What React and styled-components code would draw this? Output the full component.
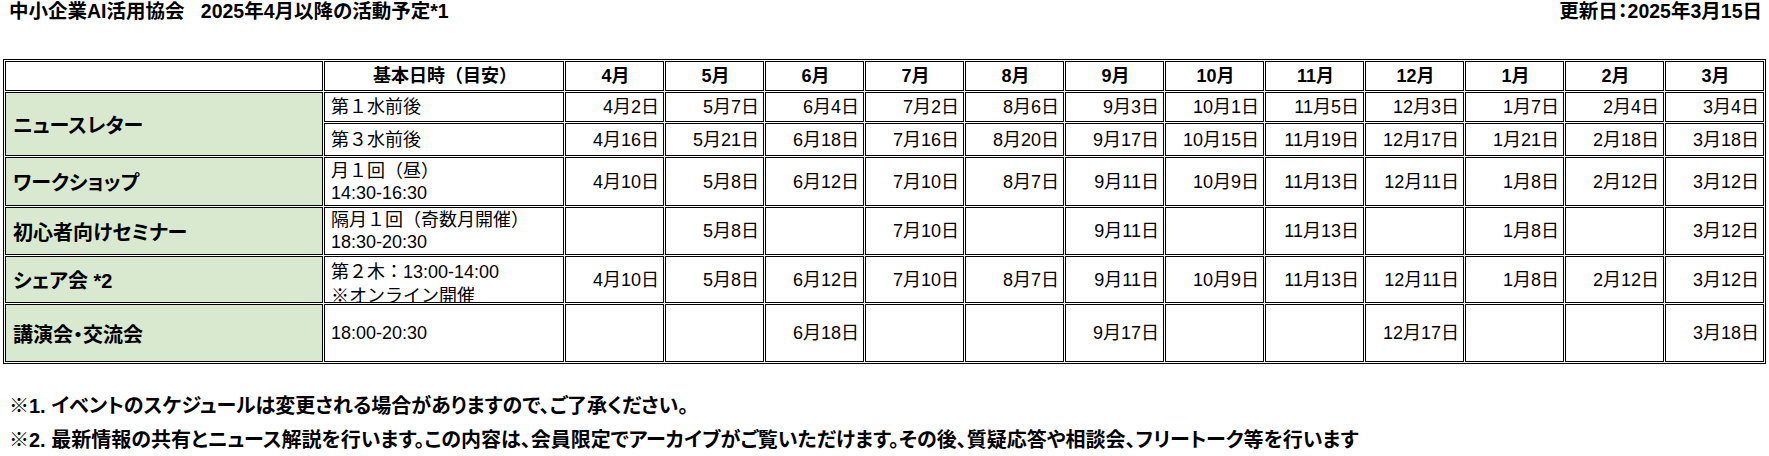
import styled, { createGlobalStyle } from 'styled-components';

const GlobalStyle = createGlobalStyle`
  *, *::before, *::after { box-sizing: border-box; }
  html, body {
    margin: 0;
    padding: 0;
    background: #fff;
  }
  body {
    font-family: "Liberation Sans", "Noto Sans CJK JP", sans-serif;
    color: #000;
  }
`;

const months = ['4月', '5月', '6月', '7月', '8月', '9月', '10月', '11月', '12月', '1月', '2月', '3月'];

const monthly = ['4月10日', '5月8日', '6月12日', '7月10日', '8月7日', '9月11日', '10月9日', '11月13日', '12月11日', '1月8日', '2月12日', '3月12日'];

const rows = [
  {
    label: 'ニュースレター',
    subs: [
      {
        lines: ['第１水前後'],
        h: 28,
        dates: ['4月2日', '5月7日', '6月4日', '7月2日', '8月6日', '9月3日', '10月1日', '11月5日', '12月3日', '1月7日', '2月4日', '3月4日'],
      },
      {
        lines: ['第３水前後'],
        h: 31,
        dates: ['4月16日', '5月21日', '6月18日', '7月16日', '8月20日', '9月17日', '10月15日', '11月19日', '12月17日', '1月21日', '2月18日', '3月18日'],
      },
    ],
  },
  {
    label: 'ワークショップ',
    subs: [{ lines: ['月１回（昼）', '14:30-16:30'], h: 47, dates: monthly }],
  },
  {
    label: '初心者向けセミナー',
    subs: [
      {
        lines: ['隔月１回（奇数月開催）', '18:30-20:30'],
        h: 46,
        dates: ['', '5月8日', '', '7月10日', '', '9月11日', '', '11月13日', '', '1月8日', '', '3月12日'],
      },
    ],
  },
  {
    label: 'シェア会 *2',
    subs: [{ lines: ['第２木：13:00-14:00', '※オンライン開催'], h: 45, dates: monthly, clipped: true }],
  },
  {
    label: '講演会・交流会',
    subs: [
      {
        lines: ['18:00-20:30'],
        h: 56,
        dates: ['', '', '6月18日', '', '', '9月17日', '', '', '12月17日', '', '', '3月18日'],
      },
    ],
  },
];

export default function App() {
  return (
    <Page>
      <GlobalStyle />
      <TopBar>
        <span>中小企業AI活用協会{'\u00a0\u00a0\u00a0'}2025年4月以降の活動予定*1</span>
        <span>更新日：2025年3月15日</span>
      </TopBar>

      <Schedule>
        <colgroup>
          <Col $w={318} />
          <Col $w={240} />
          {months.map(m => <Col key={m} $w={99} />)}
        </colgroup>
        <thead>
          <tr>
            <HeadCell><Box $h={28} $align="center" /></HeadCell>
            <HeadCell><Box $h={28} $align="center">基本日時（目安）</Box></HeadCell>
            {months.map(m => (
              <HeadCell key={m}><Box $h={28} $align="center">{m}</Box></HeadCell>
            ))}
          </tr>
        </thead>
        <tbody>
          {rows.map(row =>
            row.subs.map((sub, i) => (
              <tr key={row.label + i}>
                {i === 0 && <Label rowSpan={row.subs.length}>{row.label}</Label>}
                <Cell>
                  <Box $h={sub.h} $clipped={sub.clipped}>
                    {sub.lines.map(l => <Line key={l}>{l}</Line>)}
                  </Box>
                </Cell>
                {sub.dates.map((d, j) => (
                  <Cell key={j}>
                    <Box $h={sub.h} $align="right">{d}</Box>
                  </Cell>
                ))}
              </tr>
            ))
          )}
        </tbody>
      </Schedule>

      <Notes>
        <Note>※1. イベントのスケジュールは変更される場合がありますので、ご了承ください。</Note>
        <Note>※2. 最新情報の共有とニュース解説を行います。この内容は、会員限定でアーカイブがご覧いただけます。その後、質疑応答や相談会、フリートーク等を行います</Note>
      </Notes>
    </Page>
  );
}

const Page = styled.div`
  width: 1769px;
  padding: 0 3px;
`;

const TopBar = styled.div`
  display: flex;
  justify-content: space-between;
  align-items: center;
  height: 22px;
  padding: 0 4px 0 6px;
  font-size: 19.5px;
  font-weight: bold;
  line-height: 22px;
  font-feature-settings: "palt";
`;

const Schedule = styled.table`
  margin-top: 37px;
  width: 1763px;
  table-layout: fixed;
  border-collapse: separate;
  border-spacing: 1px;
  border: 1px solid #000;
  font-size: 18px;
`;

const Col = styled.col`
  width: ${p => p.$w}px;
`;

const Cell = styled.td`
  border: 1px solid #000;
  padding: 0;
  vertical-align: middle;
`;

const HeadCell = styled(Cell).attrs({ as: 'th' })`
  font-weight: bold;
`;

const Label = styled(Cell)`
  background: #d8e9d0;
  font-size: 20px;
  font-weight: bold;
  padding-left: 7px;
  font-feature-settings: "palt";
`;

const Box = styled.div`
  height: ${p => p.$h}px;
  overflow: hidden;
  display: flex;
  flex-direction: column;
  justify-content: ${p => (p.$clipped ? 'flex-start' : 'center')};
  align-items: ${p =>
    p.$align === 'right' ? 'flex-end' : p.$align === 'center' ? 'center' : 'flex-start'};
  padding: ${p => (p.$clipped ? '3px' : '0')} 4px 0 6px;
  line-height: ${p => (p.$clipped ? '24px' : '22px')};
  white-space: nowrap;
`;

const Line = styled.div``;

const Notes = styled.div`
  padding: 25px 0 0 6px;
  font-size: 20px;
  font-weight: bold;
  line-height: 34px;
  font-feature-settings: "palt";
`;

const Note = styled.div``;
